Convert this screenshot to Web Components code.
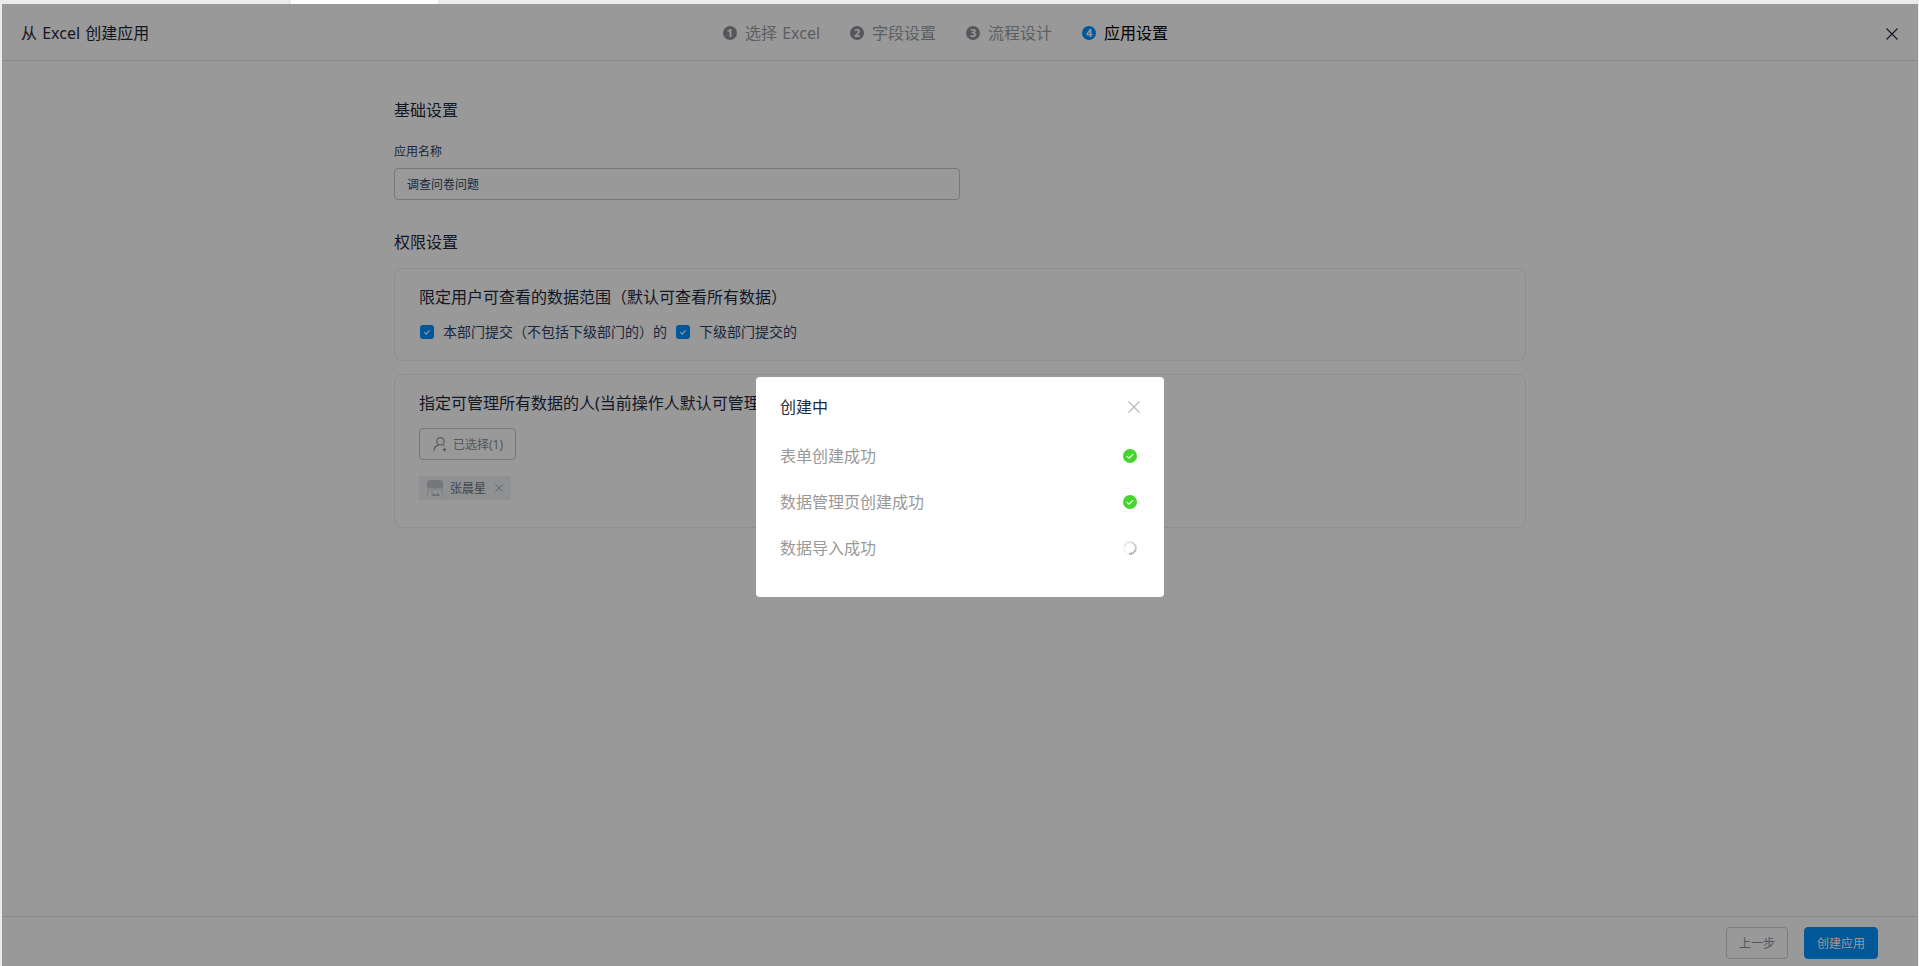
<!DOCTYPE html>
<html lang="zh-CN">
<head>
<meta charset="utf-8">
<title>从 Excel 创建应用</title>
<style>
  html, body { margin: 0; height: 100%; overflow: hidden; background: #ebebeb; }
  body { font-family: "Noto Sans", "Noto Sans CJK SC", sans-serif; color: #1f2a3d; }
  a-frame { height: 100vh; }
</style>
</head>
<body>
<a-frame>
  <top-bar title="从 Excel 创建应用">
    <wizard-step num="1">选择 Excel</wizard-step>
    <wizard-step num="2">字段设置</wizard-step>
    <wizard-step num="3">流程设计</wizard-step>
    <wizard-step num="4" active>应用设置</wizard-step>
  </top-bar>

  <settings-body>
    <section-title>基础设置</section-title>
    <text-field label="应用名称" value="调查问卷问题"></text-field>
    <section-title style="margin-top:30px">权限设置</section-title>
    <perm-card heading="限定用户可查看的数据范围（默认可查看所有数据）" style="margin-top:14px">
      <check-item>本部门提交（不包括下级部门的）的</check-item>
      <check-item>下级部门提交的</check-item>
    </perm-card>
    <perm-card heading="指定可管理所有数据的人(当前操作人默认可管理所有数据)" style="margin-top:13px;padding-bottom:27px">
      <user-picker count="1" user="张晨星"></user-picker>
    </perm-card>
  </settings-body>

  <bottom-bar>
    <app-button>上一步</app-button>
    <app-button primary>创建应用</app-button>
  </bottom-bar>

  <progress-modal heading="创建中">
    <progress-row state="done">表单创建成功</progress-row>
    <progress-row state="done">数据管理页创建成功</progress-row>
    <progress-row state="loading">数据导入成功</progress-row>
  </progress-modal>
</a-frame>

<script>
// small helper, every element below is just a shadow root with its own css
const define = (name, render) => {
  customElements.define(name, class extends HTMLElement {
    connectedCallback() {
      if (this.shadowRoot) return;
      this.attachShadow({ mode: 'open' });
      this.shadowRoot.innerHTML = render(this);
    }
  });
};

const closeIcon = (size, color, width) => `
  <svg width="${size}" height="${size}" viewBox="0 0 12 12" fill="none" stroke="${color}" stroke-width="${width}">
    <path d="M.5.5l11 11M11.5.5l-11 11"/>
  </svg>`;

define('a-frame', () => `
  <style>
    :host { display: block; position: relative; }
    .strip { height: 4px; display: flex; }
    .tab { margin-left: 291px; width: 147px; background: #fff; }
    .page {
      position: relative;
      height: calc(100% - 4px);
      margin: 0 1px 0 2px;
      background: #fff;
      display: flex;
      flex-direction: column;
    }
    .mask { position: absolute; inset: 0; background: rgba(0, 0, 0, .4); }
    ::slotted(progress-modal) { position: absolute; z-index: 2; }
  </style>
  <div class="strip"><div class="tab"></div></div>
  <div class="page">
    <slot></slot>
    <div class="mask"></div>
  </div>
`);

define('top-bar', (el) => `
  <style>
    :host {
      display: grid;
      grid-template-columns: 702px auto 1fr;
      align-items: center;
      height: 56px;
      padding: 0 20px 0 19px;
      border-bottom: 1px solid #e6e6e6;
      flex: none;
    }
    .title { font-size: 16px; line-height: 24px; color: #1f2a3d; margin-top: 2px; word-spacing: 1px; }
    .steps { display: flex; gap: 30px; margin-top: 1px; word-spacing: 1px; }
    .close { justify-self: end; display: flex; margin-top: 3px; }
  </style>
  <div class="title">${el.getAttribute('title')}</div>
  <div class="steps"><slot></slot></div>
  <div class="close">${closeIcon(12, '#1f2a3d', 1.1)}</div>
`);

define('wizard-step', (el) => {
  const active = el.hasAttribute('active');
  return `
  <style>
    :host { display: flex; align-items: center; gap: 8px; font-size: 16px; line-height: 24px; color: ${active ? '#000' : '#9b9ea4'}; white-space: nowrap; }
    .n {
      width: 14px; height: 14px; border-radius: 50%;
      background: ${active ? '#0091ff' : '#8f9196'};
      color: #fff; font-size: 11px; line-height: 14px; font-weight: 700; text-align: center;
    }
  </style>
  <span class="n">${el.getAttribute('num')}</span><slot></slot>`;
});

define('settings-body', () => `
  <style>
    :host { display: block; flex: 1; width: 1132px; margin-left: 392px; padding-top: 37px; min-height: 0; }
  </style>
  <slot></slot>
`);

define('section-title', () => `
  <style>:host { display: block; font-size: 16px; line-height: 24px; color: #1f2a3d; }</style>
  <slot></slot>
`);

define('text-field', (el) => `
  <style>
    :host { display: block; margin-top: 20px; width: 566px; }
    label { display: block; font-size: 12px; line-height: 20px; color: #304265; margin-bottom: 6px; }
    .input {
      box-sizing: border-box; height: 32px; padding: 0 12px;
      border: 1px solid #c4c7cd; border-radius: 4px;
      font-size: 12px; line-height: 31px; color: #304265;
    }
  </style>
  <label>${el.getAttribute('label')}</label>
  <div class="input">${el.getAttribute('value')}</div>
`);

define('perm-card', (el) => `
  <style>
    :host {
      display: block; box-sizing: border-box;
      padding: 16px 24px 18px;
      border: 1px solid #eceef2; border-radius: 8px;
    }
    h3 { margin: 0 0 13px; font-size: 16px; line-height: 24px; font-weight: 400; color: #1f2a3d; white-space: nowrap; }
    .items { display: flex; gap: 9px; }
    ::slotted(check-item:first-child) { margin-left: 1px; }
  </style>
  <h3>${el.getAttribute('heading')}</h3>
  <div class="items"><slot></slot></div>
`);

define('check-item', () => `
  <style>
    :host { display: flex; align-items: center; gap: 9px; font-size: 14px; line-height: 20px; color: #304265; white-space: nowrap; }
    .box { width: 14px; height: 14px; border-radius: 3px; background: #0091ff; display: flex; align-items: center; justify-content: center; }
  </style>
  <span class="box">
    <svg width="10" height="10" viewBox="0 0 10 10" fill="none" stroke="#fff" stroke-width="1.2"><path d="M2.4 5.2l1.9 1.9L7.6 3.4"/></svg>
  </span>
  <slot></slot>
`);

define('user-picker', (el) => `
  <style>
    :host { display: flex; flex-direction: column; align-items: flex-start; gap: 16px; }
    .btn {
      box-sizing: border-box; height: 32px; width: 97px; padding-left: 13px;
      display: flex; align-items: center; gap: 5px;
      border: 1px solid #c4c7cd; border-radius: 4px;
      font-size: 12px; color: #8a909b;
    }
    .tag {
      box-sizing: border-box; height: 24px; width: 92px; padding-left: 8px;
      display: flex; align-items: center; gap: 7px;
      background: #eff0f3; border-radius: 2px;
      font-size: 12px; color: #6d7480;
    }
    .x { display: flex; margin-left: 2px; }
  </style>
  <div class="btn">
    <svg width="15" height="15" viewBox="0 0 15 15" fill="none" stroke="#8a909b" stroke-width="1.1">
      <circle cx="7.5" cy="4.3" r="3.7"/>
      <path d="M.8 14.2c.2-3.4 2.2-5.6 4.8-6.1M10 8.2c.5.2 1 .5 1.3.8M11.5 10.7v3.8M9.6 12.6h3.8"/>
    </svg>
    已选择(${el.getAttribute('count')})
  </div>
  <div class="tag">
    <svg width="16" height="17" viewBox="0 0 16 17">
      <path d="M0 3a3 3 0 013-3h10a3 3 0 013 3v5H0z" fill="#c3c7ce"/>
      <path d="M0 8h16v9H0z" fill="#dde0e5"/>
      <path d="M2 10.5h12v6.5H2z" fill="#fff" opacity=".75"/>
      <path d="M4 16l3-3 2 2 2-3 2 4z" fill="#b4b9c2"/>
      <circle cx="5" cy="12.5" r="1" fill="#b4b9c2"/>
    </svg>
    ${el.getAttribute('user')}
    <span class="x">${closeIcon(8, '#8a909b', 1.1)}</span>
  </div>
`);

define('bottom-bar', () => `
  <style>
    :host {
      display: flex; justify-content: flex-end; align-items: flex-start; gap: 16px;
      flex: none; box-sizing: border-box; height: 50px;
      padding: 10px 40px 0 0;
      border-top: 1px solid #e6e6e6;
    }
  </style>
  <slot></slot>
`);

define('app-button', (el) => {
  const primary = el.hasAttribute('primary');
  return `
  <style>
    :host {
      display: flex; align-items: center; justify-content: center;
      box-sizing: border-box; height: 32px;
      padding: 0 12px;
      border: 1px solid ${primary ? '#0091ff' : '#ced1d8'}; border-radius: 4px;
      background: ${primary ? '#0091ff' : '#fff'};
      color: ${primary ? '#fff' : '#8a909b'};
      font-size: 12px;
    }
  </style>
  <slot></slot>`;
});

define('progress-modal', (el) => `
  <style>
    :host {
      display: block; box-sizing: border-box;
      left: 754px; top: 373px; width: 408px; height: 220px;
      padding: 18px 24px 0;
      background: #fff; border-radius: 4px;
    }
    .head { display: flex; justify-content: space-between; align-items: center; height: 24px; margin-bottom: 14px; }
    .head span { font-size: 16px; line-height: 24px; color: #1f2a3d; }
    .head div { display: flex; }
  </style>
  <div class="head">
    <span>${el.getAttribute('heading')}</span>
    <div>${closeIcon(12, '#b3b8c4', 1.2)}</div>
  </div>
  <slot></slot>
`);

define('progress-row', (el) => {
  const done = el.getAttribute('state') === 'done';
  // spinner is a ring of short dashes, faint bottom-left round to dark at the bottom
  let dashes = '';
  for (let i = 0; i < 20; i++) {
    const o = .08 + Math.pow(i / 19, 1.6) * .8;
    dashes += `<path d="M7 .2v2" stroke="#6f7278" stroke-width="1.2" opacity="${o.toFixed(2)}" transform="rotate(${180 - (19 - i) * 18} 7 7)"/>`;
  }
  const icon = done
    ? `<svg width="14" height="14" viewBox="0 0 14 14"><circle cx="7" cy="7" r="7" fill="#44d62c"/><path d="M3.8 7.2l2.2 2 4.2-4" fill="none" stroke="#fff" stroke-width="1.1"/></svg>`
    : `<svg width="14" height="14" viewBox="0 0 14 14" fill="none">${dashes}</svg>`;
  return `
  <style>
    :host {
      display: flex; justify-content: space-between; align-items: center;
      height: 46px; font-size: 16px; color: #999;
    }
    .t { margin-top: -2px; }
    .i { display: flex; margin-right: 3px; }
  </style>
  <span class="t"><slot></slot></span><span class="i">${icon}</span>`;
});
</script>
</body>
</html>
